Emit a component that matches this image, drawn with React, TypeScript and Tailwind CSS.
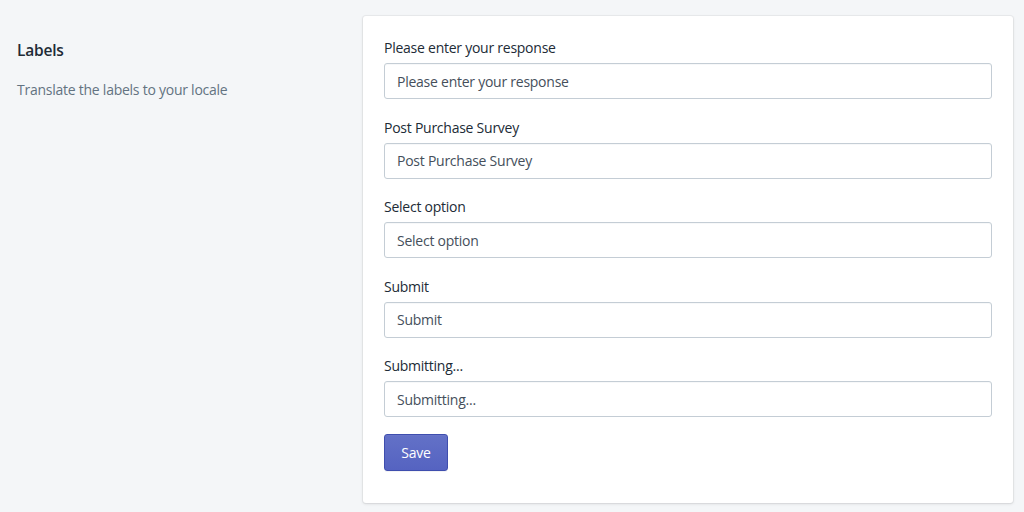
const fields = [
  'Please enter your response',
  'Post Purchase Survey',
  'Select option',
  'Submit',
  'Submitting...',
];

function Field({ label }: { label: string }) {
  return (
    <div className="flex flex-col">
      <label className="mb-[5px] text-[14px] leading-[20px] tracking-[-0.25px] text-[#212b36]">{label}</label>
      <input
        defaultValue={label}
        className="h-[36px] w-full rounded-[3px] border border-[#c4cdd5] bg-white px-[12px] text-[14px] tracking-[-0.25px] text-[#454f5b] shadow-[inset_0_1px_0_0_rgba(99,115,129,0.05)] outline-none"
      />
    </div>
  );
}

export default function App() {
  return (
    <div
      className="flex min-h-[512px] bg-[#f4f6f8] pl-[17px] pr-[11px] pt-[16px]"
      style={{ fontFamily: '"Open Sans", "Noto Sans", sans-serif' }}
    >
      <div className="w-[326px] shrink-0 pt-[22px]">
        <h2 className="text-[15.5px] font-semibold leading-[24px] tracking-[-0.2px] text-[#212b36]">Labels</h2>
        <p className="mt-[18px] text-[14px] leading-[20px] tracking-[-0.25px] text-[#637381]">Translate the labels to your locale</p>
      </div>
      <div className="ml-[20px] flex h-[487px] w-[650px] flex-col gap-[18.5px] rounded-[3px] bg-white px-[21px] pt-[22px] shadow-[0_0_0_1px_rgba(63,63,68,0.05),0_1px_3px_0_rgba(63,63,68,0.15)]">
        {fields.map((f) => (
          <Field key={f} label={f} />
        ))}
        <div className="-mt-[1.5px]">
          <button className="h-[37px] w-[64px] rounded-[3px] border border-[#3f4eae] bg-gradient-to-b from-[#6371c7] to-[#5563c1] text-[14px] tracking-[-0.2px] text-white shadow-[inset_0_1px_0_0_#6774c8,0_1px_0_0_rgba(22,29,37,0.05)]">
            Save
          </button>
        </div>
      </div>
    </div>
  );
}
